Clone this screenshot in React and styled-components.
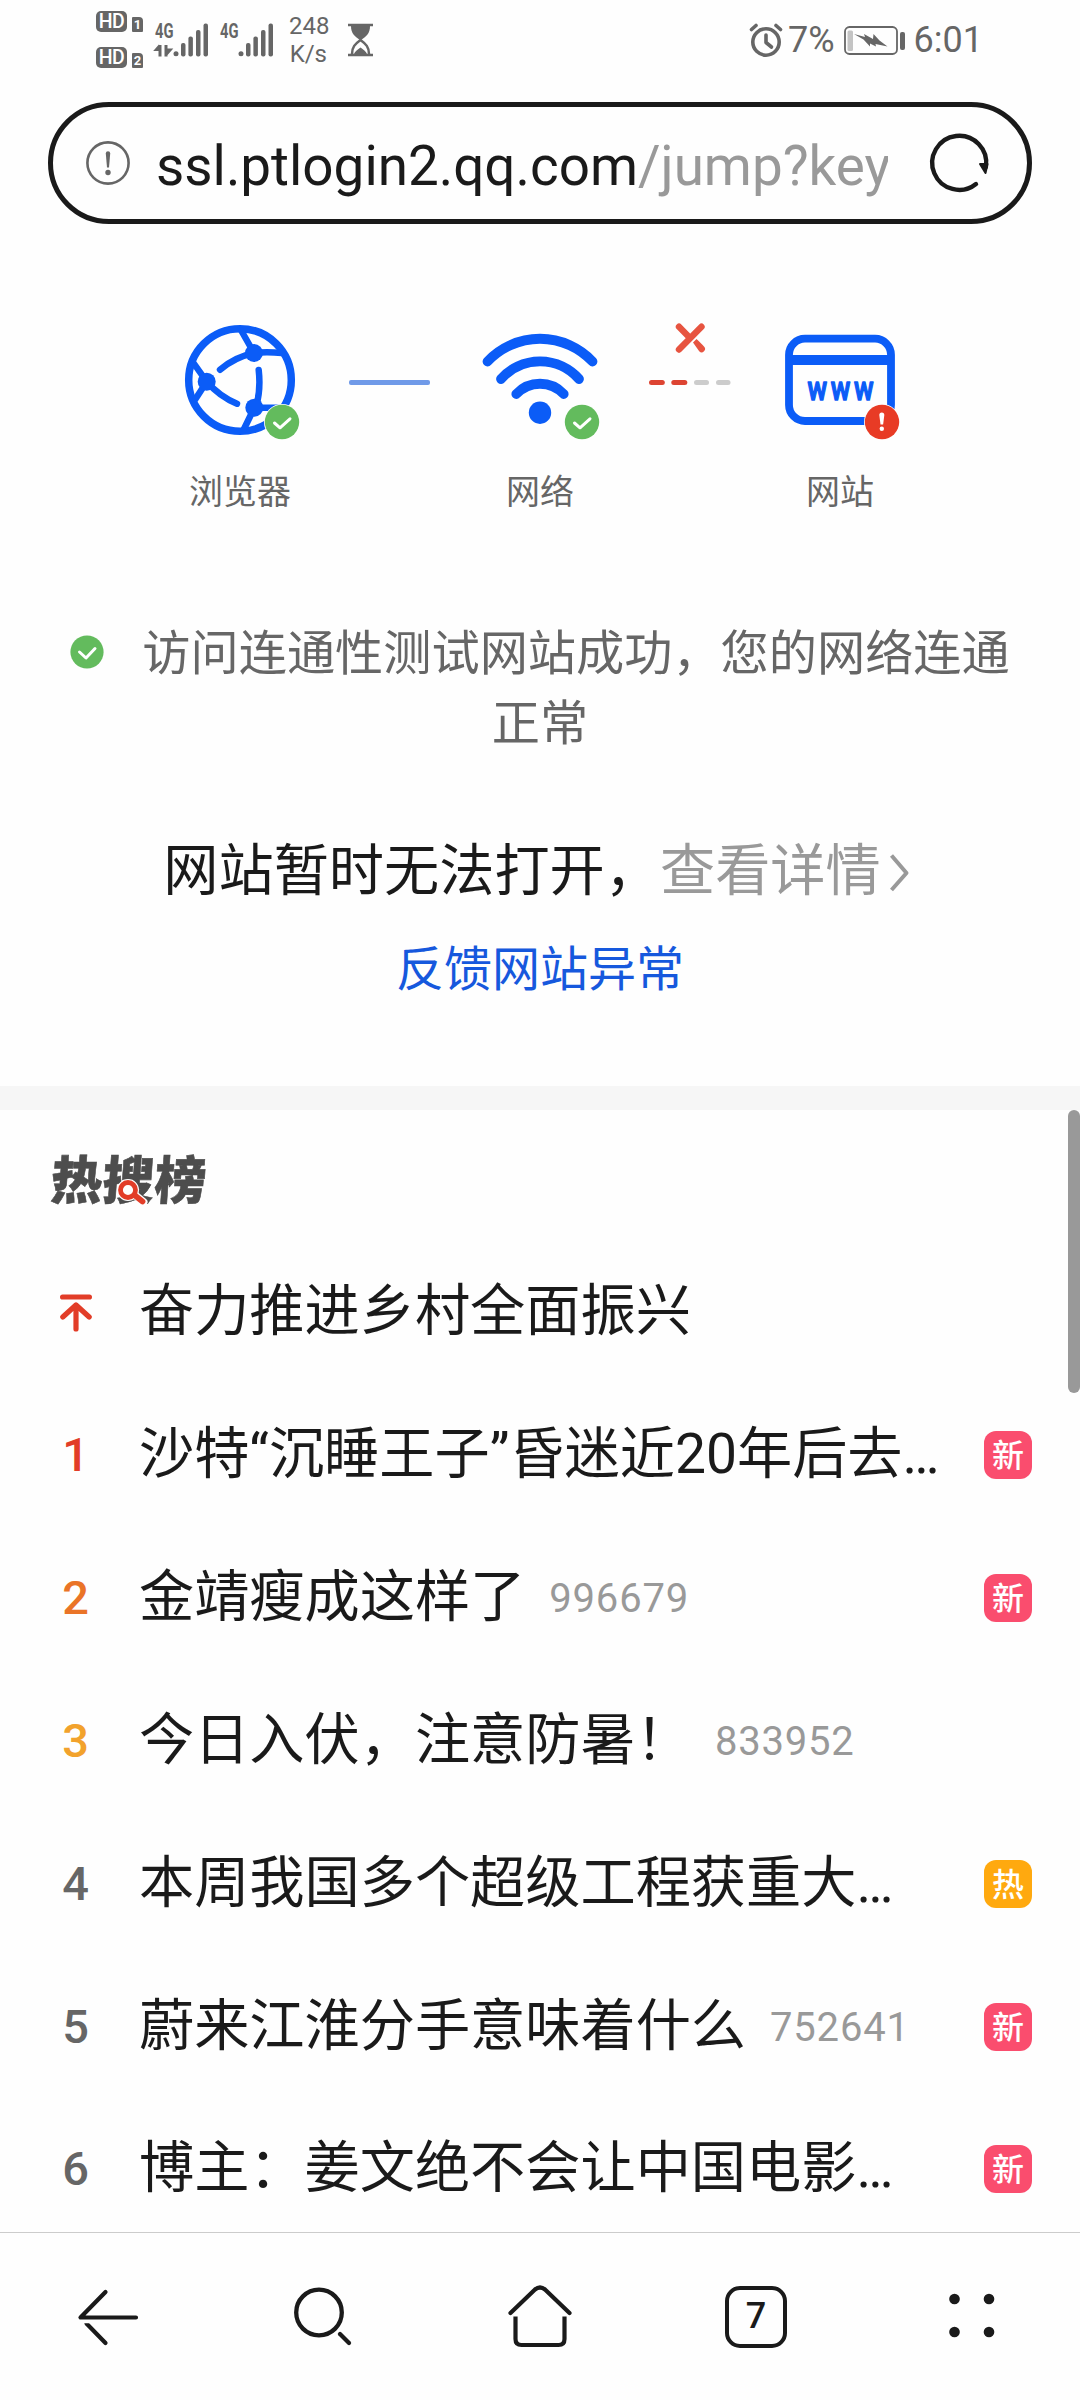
import React from "react";
import styled, { createGlobalStyle } from "styled-components";

const GlobalStyle = createGlobalStyle`
  * {
    box-sizing: border-box;
  }

  body {
    margin: 0;
    background-color: #fefefe;
    font-family: Roboto, "Noto Sans CJK SC", sans-serif;
    color: #1a1a1a;
  }

  svg {
    display: block;
    flex: none;
    overflow: visible;
  }
`;

// --- PAGE ---

const Page = styled.div`
  width: 1080px;
  height: 2400px;
  display: flex;
  flex-direction: column;
  overflow: hidden;
  background-color: #fefefe;
`;

const Content = styled.main`
  flex: 1;
  min-height: 0;
  overflow: hidden;
`;

// --- STATUS BAR ---

const StatusBar = styled.header`
  height: 79px;
  flex: none;
  display: flex;
  align-items: center;
  justify-content: space-between;
  padding: 0 97px 0 96px;
  color: #666666;
`;

const StatusGroup = styled.div`
  display: flex;
  align-items: center;
`;

const HdColumn = styled.div`
  display: flex;
  flex-direction: column;
  gap: 15px;
  margin-right: 12px;
`;

const HdRow = styled.div`
  display: flex;
  align-items: flex-end;
  gap: 5px;
`;

const HdBadge = styled.span`
  width: 31px;
  height: 21px;
  border-radius: 5px;
  background-color: #666666;
  color: #ffffff;
  font-size: 19.5px;
  font-weight: 500;
  line-height: 22px;
  text-align: center;
  letter-spacing: -0.5px;
`;

const SimBadge = styled.span`
  width: 11px;
  height: 15px;
  border-radius: 1px 4px 1px 1px;
  background-color: #666666;
  color: #ffffff;
  font-size: 13px;
  font-weight: 700;
  line-height: 15px;
  text-align: center;
`;

const SignalSlot = styled.div`
  margin-right: 11px;
`;

const Speed = styled.div`
  width: 38px;
  margin: 0 21px 0 4px;
  font-size: 24px;
  line-height: 28px;
  text-align: right;
  white-space: nowrap;
`;

const StatusText = styled.span`
  font-size: 36px;
  line-height: 40px;
  padding-top: 1px;
  margin-left: ${(props) => props.$gap}px;
`;

// --- ADDRESS BAR ---

const AddressBar = styled.div`
  height: 122px;
  margin: 23px 48px 0;
  padding: 0 38px 0 33px;
  display: flex;
  align-items: center;
  flex: none;
  border: 5px solid #1a1a1a;
  border-radius: 61px;
`;

const Url = styled.div`
  width: 733px;
  margin: 6px 41px 0 26px;
  overflow: hidden;
  white-space: nowrap;
  font-size: 54.8px;
  line-height: 80px;
`;

const UrlPath = styled.span`
  color: #999999;
`;

// --- CONNECTION CHECK ---

const Diagnosis = styled.section`
  padding-top: 96px;
  height: 862px;
  display: flex;
  flex-direction: column;
  align-items: center;
`;

const Chain = styled.div`
  display: flex;
  align-items: flex-start;
  gap: 45px;
`;

const Station = styled.div`
  width: 120px;
  display: flex;
  flex-direction: column;
  align-items: center;
`;

const StationLabel = styled.div`
  margin-top: 35px;
  font-size: 34px;
  line-height: 34px;
  color: #666666;
  white-space: nowrap;
`;

const Result = styled.p`
  width: 960px;
  margin: 110px 0 0;
  text-align: center;
  font-size: 48.2px;
  line-height: 70px;
  color: #666666;

  svg {
    display: inline-block;
    margin-right: 38px;
    vertical-align: 1px;
  }
`;

const Headline = styled.div`
  margin-top: 72px;
  display: flex;
  align-items: center;
  font-size: 55.2px;
  line-height: 80px;
  white-space: nowrap;
`;

const DetailLink = styled.span`
  display: flex;
  align-items: center;
  color: #999999;

  svg {
    margin: 4px 8px 0 8px;
  }
`;

const FeedbackLink = styled.a`
  margin-top: 29px;
  font-size: 48px;
  line-height: 60px;
  color: #1658dd;
`;

// --- HOT SEARCH LIST ---

const HotSearch = styled.section`
  position: relative;
  border-top: 24px solid #f6f6f6;
  padding: 0 48px;
`;

const ScrollThumb = styled.div`
  position: absolute;
  top: 0;
  right: 0;
  width: 12px;
  height: 283px;
  border-radius: 6px;
  background-color: #999999;
`;

const HotHeader = styled.div`
  height: 131px;
  padding-top: 39px;
`;

const HotLogo = styled.div`
  position: relative;
  width: 160px;
  padding-left: 3px;
  font-size: 51.5px;
  line-height: 66px;
  font-weight: 900;
  letter-spacing: 0.3px;
  color: #4d4d4d;
  -webkit-text-stroke: 0.6px #4d4d4d;
  white-space: nowrap;

  span {
    display: inline-block;
    transform: skewX(-4deg);
  }

  svg {
    position: absolute;
    left: 69px;
    top: 29px;
  }
`;

const HotRow = styled.div`
  height: 142.85px;
  display: flex;
  align-items: center;
`;

const Rank = styled.div`
  width: 55px;
  margin-right: 36px;
  display: flex;
  justify-content: center;
  font-size: 47px;
  line-height: 60px;
  font-weight: 500;
  color: ${(props) => props.$color};
`;

const HotTitle = styled.div`
  padding-bottom: 2px;
  font-size: 55.2px;
  line-height: 80px;
  white-space: nowrap;
`;

const HotCount = styled.div`
  margin-left: 24px;
  padding-top: 2px;
  font-size: 40px;
  line-height: 56px;
  letter-spacing: 0.8px;
  color: #999999;
`;

const Tag = styled.div`
  width: 48px;
  height: 48px;
  margin-left: auto;
  border-radius: 12px;
  background-color: ${(props) => (props.$hot ? "#ffa90f" : "#fa4d6e")};
  color: #ffffff;
  font-size: 32px;
  line-height: 50px;
  font-weight: 500;
  text-align: center;
`;

// --- BOTTOM BAR ---

const BottomBar = styled.nav`
  height: 168px;
  flex: none;
  display: grid;
  grid-template-columns: repeat(5, 1fr);
  align-items: center;
  justify-items: center;
  border-top: 1px solid #cccccc;
`;

const TabCount = styled.div`
  width: 62px;
  height: 62px;
  border: 4px solid #1a1a1a;
  border-radius: 15px;
  font-size: 36px;
  font-weight: 500;
  line-height: 52px;
  text-align: center;
`;

// --- ICONS ---

function SignalIcon({ transfer }) {
  return (
    <svg width="54" height="36" viewBox="0 0 54 36" fill="#666666">
      <text
        x="0"
        y="16"
        fontSize="20"
        fontWeight="700"
        textLength="18.5"
        lengthAdjust="spacingAndGlyphs"
      >
        4G
      </text>
      {transfer && (
        <path d="M5 23v11.500M5 23.500l-3.500 4h3M11 23v11.500M11.500 32l3.500-4h-3" stroke="#666666" strokeWidth="3" fill="none" />
      )}
      <circle cx="21" cy="31.700" r="2.500" />
      <rect x="26" y="21" width="4.500" height="13.500" rx="2" />
      <rect x="33.400" y="14.500" width="4.500" height="20" rx="2" />
      <rect x="41" y="8" width="4.500" height="26.500" rx="2" />
      <rect x="48.500" y="1.500" width="4.500" height="33" rx="2" />
    </svg>
  );
}

function HourglassIcon() {
  return (
    <svg width="25" height="32" viewBox="0 0 25 32">
      <path d="M0 1h25M0 31h25" stroke="#666666" strokeWidth="2.500" />
      <path d="M3 2h19c0 7-3 10-9.500 14.500C6 12 3 9 3 2Z" fill="#666666" />
      <path d="M4 30c0-7 3-10 8.500-14C18 20 21 23 21 30" fill="none" stroke="#666666" strokeWidth="2.500" />
      <path d="M6 30c1-3 3-3.500 6.500-6.500C16 26.500 18 27 19 30Z" fill="#666666" />
    </svg>
  );
}

function AlarmIcon() {
  return (
    <svg width="34" height="34" viewBox="0 0 34 34" fill="none" stroke="#666666" strokeLinecap="round">
      <circle cx="17" cy="19" r="13.200" strokeWidth="3.600" />
      <path d="M17 12v7.500l5.500 4.500" strokeWidth="3.600" strokeLinejoin="round" />
      <path d="M2.500 6.500l4.500-4M27 2.500l4.500 4" strokeWidth="3.600" />
    </svg>
  );
}

function BatteryIcon() {
  return (
    <svg width="61" height="29" viewBox="0 0 61 29">
      <rect x="1" y="1" width="52" height="27" rx="4.500" fill="none" stroke="#666666" strokeWidth="1.800" />
      <rect x="3.500" y="4.500" width="5.500" height="20.500" rx="1.500" fill="#c4c4c4" />
      <path d="M10 8l11 3-1-3 9 5 .5-5 6 6.500L43.500 20.500l-12-2.500.5 2.500-6-3v3l-6.500-7Z" fill="#666666" />
      <rect x="56" y="6" width="5" height="18" rx="2" fill="#666666" />
    </svg>
  );
}

function InfoIcon() {
  return (
    <svg width="44" height="44" viewBox="0 0 44 44">
      <circle cx="22" cy="22" r="20.600" fill="none" stroke="#666666" strokeWidth="2.600" />
      <path d="M19.800 12.500a2.200 2.200 0 0 1 4.400 0L23 26.500h-2Z" fill="#666666" />
      <circle cx="22" cy="31.500" r="2.700" fill="#666666" />
    </svg>
  );
}

function ReloadIcon() {
  return (
    <svg width="60" height="60" viewBox="0 0 60 60">
      <path d="M56.900 34A27 27 0 1 0 47 51" fill="none" stroke="#1a1a1a" strokeWidth="4.400" strokeLinecap="round" />
      <path d="M51 31h7.500L56.500 40Z" fill="#1a1a1a" stroke="#1a1a1a" strokeWidth="2" strokeLinejoin="round" />
    </svg>
  );
}

function OkMark() {
  return (
    <g stroke="none">
      <circle cx="102" cy="102" r="18" fill="#fefefe" />
      <circle cx="102" cy="102" r="17.200" fill="#63bb5d" />
      <path d="M94.500 103l5.500 4.800 10-9" fill="none" stroke="#ffffff" strokeWidth="3" strokeLinecap="round" strokeLinejoin="round" />
    </g>
  );
}

function BrowserIcon() {
  return (
    <svg width="120" height="120" viewBox="0 0 120 120" fill="none" stroke="#0b5cf7" strokeWidth="6.500" strokeLinecap="round">
      <circle cx="60" cy="60" r="51.300" strokeWidth="7.500" />
      <path d="M74 33L61.500 11M74 33q12-1.500 28 0M74 33Q55 37 40 49.700" />
      <path d="M26.700 61.700L13.500 43M26.700 61.700L15.500 79M26.700 61.700Q40 77 57 83.700" />
      <path d="M74.300 87.700L64 109M74.300 87.700H100M76 87Q81 70 78.700 50" />
      <g fill="#0b5cf7" stroke="none">
        <circle cx="74" cy="33" r="9" />
        <circle cx="26.700" cy="61.700" r="9" />
        <circle cx="74.300" cy="87.700" r="9" />
      </g>
      <OkMark />
    </svg>
  );
}

function NetworkIcon() {
  return (
    <svg width="120" height="120" viewBox="0 0 120 120" fill="none" stroke="#0b5cf7" strokeWidth="9.800" strokeLinecap="round">
      <path d="M7.500 41.500A72 72 0 0 1 112.500 41.500" />
      <path d="M21 59A52 52 0 0 1 99 59" />
      <path d="M36.300 74A32.500 32.500 0 0 1 83.700 74" />
      <circle cx="60" cy="92.700" r="11.200" fill="#0b5cf7" stroke="none" />
      <OkMark />
    </svg>
  );
}

function SiteIcon() {
  return (
    <svg width="120" height="120" viewBox="0 0 120 120">
      <rect x="9" y="18.700" width="102" height="82.300" rx="16" fill="none" stroke="#0b5cf7" strokeWidth="7.800" />
      <path d="M9 40h102" stroke="#0b5cf7" strokeWidth="9.800" />
      <text
        transform="translate(27.5 79.5) scale(0.8 1)"
        fill="#0b5cf7"
        stroke="#0b5cf7"
        strokeWidth="1.400"
        strokeLinejoin="round"
        fontSize="33"
        fontWeight="500"
        letterSpacing="4.600"
      >
        www
      </text>
      <circle cx="102" cy="102" r="18" fill="#fefefe" />
      <circle cx="102" cy="102" r="17.200" fill="#e83b25" />
      <path d="M99.300 95a2.500 2.500 0 0 1 5 0l-1.200 9.500h-2.600Z" fill="#ffffff" />
      <circle cx="101.800" cy="108.800" r="2.200" fill="#ffffff" />
    </svg>
  );
}

function LinkOk() {
  return (
    <svg width="90" height="120" viewBox="0 0 90 120">
      <rect x="4" y="60" width="81" height="5" rx="2" fill="#709ae8" />
    </svg>
  );
}

function LinkBroken() {
  return (
    <svg width="90" height="120" viewBox="0 0 90 120">
      <path
        d="M34 29.500L56.500 6.700M34 6.700L44.500 17.500"
        stroke="#e75440"
        strokeWidth="6.400"
        strokeLinecap="round"
      />
      <path d="M48 22.500l3.500-3.500c3 3 5.500 5 7.500 7.500a3 3 0 0 1-4.800 4.800Z" fill="#e75440" />
      <rect x="4" y="60" width="15.800" height="5" rx="2.500" fill="#dd4432" />
      <rect x="26.300" y="60" width="16" height="5" rx="2.500" fill="#dd4432" />
      <rect x="49" y="60" width="15" height="5" rx="2.500" fill="#cccccc" />
      <rect x="71" y="60" width="14.500" height="5" rx="2.500" fill="#cccccc" />
    </svg>
  );
}

function ResultOkIcon() {
  return (
    <svg width="34" height="34" viewBox="0 0 34 34">
      <circle cx="17" cy="17" r="16.600" fill="#63bb5d" />
      <path d="M9.500 17l6.500 6 9-9.500" fill="none" stroke="#ffffff" strokeWidth="3" strokeLinecap="round" strokeLinejoin="round" />
    </svg>
  );
}

function ChevronIcon() {
  return (
    <svg width="20" height="38" viewBox="0 0 20 38" fill="none" stroke="#999999" strokeWidth="4">
      <path d="M2.500 1.500L17.500 19 2.500 36" strokeLinejoin="round" />
    </svg>
  );
}

function LogoLens() {
  return (
    <svg width="32" height="32" viewBox="0 0 32 32" fill="none" strokeLinecap="round">
      <path d="M18 17l8.500 7" stroke="#fefefe" strokeWidth="8" />
      <circle cx="11" cy="12" r="7.500" fill="#fefefe" stroke="#fefefe" strokeWidth="7" />
      <circle cx="11" cy="12" r="7.500" stroke="#e23d28" strokeWidth="4.800" />
      <path d="M18 17.500l7.500 6" stroke="#e23d28" strokeWidth="5.800" />
    </svg>
  );
}

function PinnedIcon() {
  return (
    <svg width="32" height="36" viewBox="0 0 32 36" fill="none" stroke="#e23d28" strokeWidth="5.200" strokeLinecap="round" strokeLinejoin="round">
      <path d="M2.600 3h26.800M16 35V12M2.800 23L16 11l13.200 12" />
    </svg>
  );
}

function BackIcon() {
  return (
    <svg width="60" height="60" viewBox="0 0 60 60" fill="none" stroke="#1a1a1a" strokeWidth="4.200" strokeLinecap="round" strokeLinejoin="round">
      <path d="M27.500 5L2.500 30.500H58" />
      <path d="M8.500 36.500L27.500 56" />
      <path d="M2 35h12" stroke="#fefefe" strokeWidth="2.500" strokeLinecap="butt" />
    </svg>
  );
}

function SearchIcon() {
  return (
    <svg width="60" height="60" viewBox="0 0 60 60" fill="none" stroke="#1a1a1a" strokeWidth="4.300" strokeLinecap="round">
      <circle cx="25" cy="25.500" r="22.800" />
      <path d="M46 47l9 9" />
    </svg>
  );
}

function HomeIcon() {
  return (
    <svg width="64" height="64" viewBox="0 0 64 64" fill="none" stroke="#1a1a1a" strokeWidth="4.200" strokeLinecap="round" strokeLinejoin="round">
      <path d="M2.500 28L27 4.500q5-4 10 0L61.500 28" />
      <path d="M7.500 31.500V54q0 6 6 6h37q6 0 6-6V31.500" strokeLinecap="butt" />
    </svg>
  );
}

function MenuIcon() {
  return (
    <svg width="46" height="46" viewBox="0 0 46 46" fill="#1a1a1a">
      <circle cx="5.500" cy="5" r="5.300" />
      <circle cx="40" cy="5" r="5.300" />
      <circle cx="5.500" cy="38" r="5.300" />
      <circle cx="40" cy="38" r="5.300" />
    </svg>
  );
}

// --- DATA ---

const hotItems = [
  { rank: "top", title: "奋力推进乡村全面振兴" },
  { rank: 1, title: "沙特“沉睡王子”昏迷近20年后去…", tag: "新" },
  { rank: 2, title: "金靖瘦成这样了", count: 996679, tag: "新" },
  { rank: 3, title: "今日入伏，注意防暑！", count: 833952 },
  { rank: 4, title: "本周我国多个超级工程获重大…", tag: "热" },
  { rank: 5, title: "蔚来江淮分手意味着什么", count: 752641, tag: "新" },
  { rank: 6, title: "博主：姜文绝不会让中国电影…", tag: "新" },
];

const rankColors = { 1: "#e23d28", 2: "#ea7427", 3: "#f2a22c" };

function HotItem({ rank, title, count, tag }) {
  return (
    <HotRow>
      <Rank $color={rankColors[rank] || "#666666"}>
        {rank === "top" ? <PinnedIcon /> : rank}
      </Rank>
      <HotTitle>{title}</HotTitle>
      {count && <HotCount>{count}</HotCount>}
      {tag && <Tag $hot={tag === "热"}>{tag}</Tag>}
    </HotRow>
  );
}

function App() {
  return (
    <Page>
      <GlobalStyle />
      <StatusBar>
        <StatusGroup>
          <HdColumn>
            <HdRow>
              <HdBadge>HD</HdBadge>
              <SimBadge>1</SimBadge>
            </HdRow>
            <HdRow>
              <HdBadge>HD</HdBadge>
              <SimBadge>2</SimBadge>
            </HdRow>
          </HdColumn>
          <SignalSlot>
            <SignalIcon transfer />
          </SignalSlot>
          <SignalSlot>
            <SignalIcon />
          </SignalSlot>
          <Speed>
            <div>248</div>
            <div>K/s</div>
          </Speed>
          <HourglassIcon />
        </StatusGroup>
        <StatusGroup>
          <AlarmIcon />
          <StatusText $gap={5}>7%</StatusText>
          <StatusText $gap={9}>
            <BatteryIcon />
          </StatusText>
          <StatusText $gap={9}>6:01</StatusText>
        </StatusGroup>
      </StatusBar>

      <AddressBar>
        <InfoIcon />
        <Url>
          ssl.ptlogin2.qq.com<UrlPath>/jump?key</UrlPath>
        </Url>
        <ReloadIcon />
      </AddressBar>

      <Content>
        <Diagnosis>
          <Chain>
            <Station>
              <BrowserIcon />
              <StationLabel>浏览器</StationLabel>
            </Station>
            <LinkOk />
            <Station>
              <NetworkIcon />
              <StationLabel>网络</StationLabel>
            </Station>
            <LinkBroken />
            <Station>
              <SiteIcon />
              <StationLabel>网站</StationLabel>
            </Station>
          </Chain>
          <Result>
            <ResultOkIcon />
            访问连通性测试网站成功，您的网络连通正常
          </Result>
          <Headline>
            网站暂时无法打开，
            <DetailLink>
              查看详情
              <ChevronIcon />
            </DetailLink>
          </Headline>
          <FeedbackLink>反馈网站异常</FeedbackLink>
        </Diagnosis>

        <HotSearch>
          <ScrollThumb />
          <HotHeader>
            <HotLogo>
              <span>热搜榜</span>
              <LogoLens />
            </HotLogo>
          </HotHeader>
          {hotItems.map((item) => (
            <HotItem key={item.rank} {...item} />
          ))}
        </HotSearch>
      </Content>

      <BottomBar>
        <BackIcon />
        <SearchIcon />
        <HomeIcon />
        <TabCount>7</TabCount>
        <MenuIcon />
      </BottomBar>
    </Page>
  );
}

export default App;
